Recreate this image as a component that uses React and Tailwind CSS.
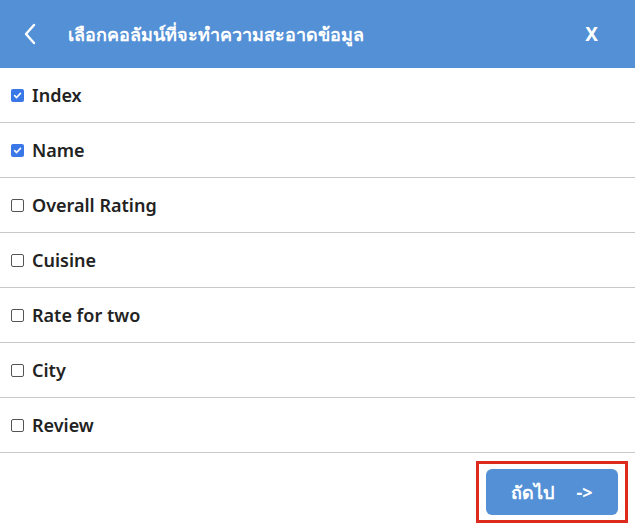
import React from "react";

const cols = [
  { label: "Index", checked: true },
  { label: "Name", checked: true },
  { label: "Overall Rating", checked: false },
  { label: "Cuisine", checked: false },
  { label: "Rate for two", checked: false },
  { label: "City", checked: false },
  { label: "Review", checked: false },
];

function Box({ checked }) {
  if (checked) {
    return (
      <span className="flex h-[13px] w-[13px] items-center justify-center rounded-[2px] bg-[#3b78e7]">
        <svg width="9" height="9" viewBox="0 0 10 10">
          <path d="M1.8 5.2 L4 7.3 L8.3 2.6" fill="none" stroke="white" strokeWidth="1.8" strokeLinecap="round" strokeLinejoin="round" />
        </svg>
      </span>
    );
  }
  return <span className="block h-[13px] w-[13px] rounded-[2px] border border-[#555] bg-white" />;
}

export default function App() {
  return (
    <div className="relative h-[530px] w-[635px] bg-white text-[#222]" style={{ fontFamily: '"Noto Sans", "Open Sans", sans-serif' }}>
      <div className="flex h-[68px] items-center bg-[#5390d6] text-white">
        <svg className="ml-[22px]" width="16" height="24" viewBox="0 0 16 24">
          <path d="M12 3 L4 12 L12 21" fill="none" stroke="white" strokeWidth="2.4" strokeLinecap="round" strokeLinejoin="round" />
        </svg>
        <span className="ml-[30px] text-[18px] font-semibold">เลือกคอลัมน์ที่จะทำความสะอาดข้อมูล</span>
        <span className="ml-auto mr-[37px] text-[19px] font-bold">X</span>
      </div>
      {cols.map((c) => (
        <div key={c.label} className="flex h-[55px] items-center border-b border-[#c8c8c8] pt-[1px]">
          <span className="ml-[11px] mr-[8px]"><Box checked={c.checked} /></span>
          <span className="text-[18px] font-semibold text-[#222]">{c.label}</span>
        </div>
      ))}
      <div className="flex justify-end pr-[7px] pt-[8px]">
        <div className="border-[3px] border-[#dc2a1c] px-[7px] py-[5px]">
          <button className="flex h-[46px] w-[132px] items-center justify-center gap-[22px] rounded-[6px] bg-[#5390d6] text-[18px] font-semibold text-white">
            <span>ถัดไป</span>
            <span className="font-bold">-&gt;</span>
          </button>
        </div>
      </div>
    </div>
  );
}
